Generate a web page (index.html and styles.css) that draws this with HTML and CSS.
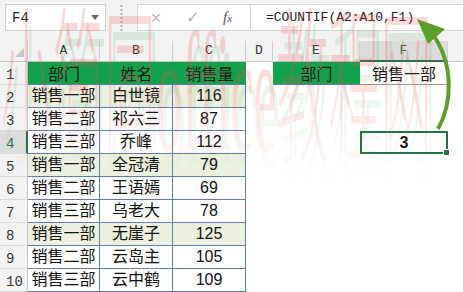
FILE: index.html
```html
<!DOCTYPE html>
<html lang="zh-CN">
<head>
    <meta charset="UTF-8">
    <title>COUNTIF</title>
    <link rel="stylesheet" href="styles.css">
</head>
<body>
    <div class="toolbar">
        <div class="namebox"><span>F4</span><span class="caret"></span></div>
        <div class="grip"></div>
        <div class="formula">
            <div class="fx-btns">
                <span class="btn-x">✕</span>
                <span class="btn-ok">✓</span>
                <span class="fx"><i>f</i><i class="x">x</i></span>
            </div>
            <div class="formula-text">=COUNTIF(A2:A10,F1)</div>
        </div>
    </div>

    <div class="sheet">
        <div class="corner"></div>
        <div class="ch">A</div><div class="ch">B</div><div class="ch">C</div><div class="ch">D</div>
        <div class="ch">E</div><div class="ch sel">F</div><div class="ch last"></div>

        <div class="rh">1</div>
        <div class="c head">部门</div><div class="c head">姓名</div><div class="c head">销售量</div>
        <div class="c"></div><div class="c head">部门</div><div class="c crit">销售一部</div><div class="c"></div>

        <div class="rh">2</div>
        <div class="c t hl">销售一部</div><div class="c t hl">白世镜</div><div class="c t hl">116</div>
        <div class="c"></div><div class="c"></div><div class="c"></div><div class="c"></div>

        <div class="rh">3</div>
        <div class="c t">销售二部</div><div class="c t">祁六三</div><div class="c t">87</div>
        <div class="c"></div><div class="c"></div><div class="c"></div><div class="c"></div>

        <div class="rh sel">4</div>
        <div class="c t">销售三部</div><div class="c t">乔峰</div><div class="c t">112</div>
        <div class="c"></div><div class="c"></div><div class="c active">3</div><div class="c"></div>

        <div class="rh">5</div>
        <div class="c t hl">销售一部</div><div class="c t hl">全冠清</div><div class="c t hl">79</div>
        <div class="c"></div><div class="c"></div><div class="c"></div><div class="c"></div>

        <div class="rh">6</div>
        <div class="c t">销售二部</div><div class="c t">王语嫣</div><div class="c t">69</div>
        <div class="c"></div><div class="c"></div><div class="c"></div><div class="c"></div>

        <div class="rh">7</div>
        <div class="c t">销售三部</div><div class="c t">乌老大</div><div class="c t">78</div>
        <div class="c"></div><div class="c"></div><div class="c"></div><div class="c"></div>

        <div class="rh">8</div>
        <div class="c t hl">销售一部</div><div class="c t hl">无崖子</div><div class="c t hl">125</div>
        <div class="c"></div><div class="c"></div><div class="c"></div><div class="c"></div>

        <div class="rh">9</div>
        <div class="c t">销售二部</div><div class="c t">云岛主</div><div class="c t">105</div>
        <div class="c"></div><div class="c"></div><div class="c"></div><div class="c"></div>

        <div class="rh">10</div>
        <div class="c t">销售三部</div><div class="c t">云中鹤</div><div class="c t">109</div>
        <div class="c"></div><div class="c"></div><div class="c"></div><div class="c"></div>
    </div>

    <div class="watermark">小简同office教程网</div>

    <svg class="arrow" width="463" height="292" viewBox="0 0 463 292">
        <path d="M438 129 C452 104 454 66 434 36" fill="none" stroke="#5c9e2c" stroke-width="4"/>
        <polygon points="417,19 445,29 428,44" fill="#5c9e2c"/>
    </svg>
</body>
</html>
```

FILE: styles.css
```css
body {
    margin: 0;
    width: 463px;
    height: 292px;
    overflow: hidden;
    position: relative;
    background: #fff;
    font-family: "Noto Sans CJK SC", sans-serif;
}

.toolbar {
    height: 41px;
    background: #f3f3f3;
    display: flex;
    align-items: flex-start;
    padding-top: 4px;
    box-sizing: border-box;
    font-family: "Liberation Mono", monospace;
}

.namebox {
    margin-left: 5px;
    width: 101px;
    height: 27px;
    box-sizing: border-box;
    background: #fff;
    border: 1px solid #cfcfcf;
    display: flex;
    align-items: center;
    justify-content: space-between;
    padding: 0 6px;
    font-size: 14px;
    color: #222;
}

.caret {
    width: 0;
    height: 0;
    border-left: 4px solid transparent;
    border-right: 4px solid transparent;
    border-top: 5px solid #666;
}

.grip {
    width: 31px;
    height: 27px;
    background: radial-gradient(circle, #b5b5b5 1px, transparent 1.3px);
    background-size: 3px 4px;
    background-position: 14px 8px;
    background-repeat: repeat-y;
}

.formula {
    flex: 1;
    height: 27px;
    display: flex;
    background: #fff;
    border: 1px solid #d4d4d4;
    border-right: none;
    box-sizing: border-box;
}

.fx-btns {
    width: 112px;
    display: flex;
    align-items: center;
    border-right: 1px solid #d4d4d4;
    color: #b4b4b4;
}

.btn-x {
    margin-left: 12px;
    width: 36px;
    font-family: "DejaVu Sans", sans-serif;
    font-size: 14px;
}

.btn-ok {
    width: 37px;
    font-family: "DejaVu Sans", sans-serif;
    font-size: 16px;
}

.fx {
    font-family: "Liberation Serif", serif;
    color: #555;
    font-size: 15px;
}

.fx .x {
    font-size: 11px;
}

.formula-text {
    padding-left: 15px;
    line-height: 25px;
    font-size: 13px;
    color: #222;
}

.sheet {
    display: grid;
    grid-template-columns: 28px 72px 73px 73px 27px 87px 88px 1fr;
    grid-template-rows: 21px repeat(10, 23px);
}

.corner {
    background: #f3f3f3;
    border-right: 1px solid #d0d0d0;
    border-bottom: 1px solid #c4c4c4;
    position: relative;
}

.corner::after {
    content: "";
    position: absolute;
    right: 3px;
    bottom: 4px;
    border-left: 9px solid transparent;
    border-bottom: 9px solid #c6c6c6;
}

.ch {
    background: #f3f3f3;
    border-right: 1px solid #d0d0d0;
    border-bottom: 1px solid #c4c4c4;
    font-family: "Liberation Mono", monospace;
    font-size: 13px;
    color: #333;
    text-align: center;
    line-height: 20px;
}

.ch.sel {
    background: #dcdcdc;
    border-bottom: 2px solid #217346;
    color: #217346;
}

.ch.last {
    border-right: none;
}

.rh {
    background: #f3f3f3;
    border-right: 1px solid #c4c4c4;
    border-bottom: 1px solid #dadada;
    font-family: "Liberation Mono", monospace;
    font-size: 14px;
    color: #333;
    padding-left: 6px;
    line-height: 26px;
    box-sizing: border-box;
}

.rh.sel {
    background: #dcdcdc;
    border-right: 2px solid #217346;
    color: #217346;
}

.c {
    font-size: 16px;
    line-height: 22px;
    text-align: center;
    color: #111;
    box-sizing: border-box;
}

.head {
    background: #13a24c;
    border-bottom: 1px solid #5b7cb4;
}

.crit {
    border-bottom: 1px solid #9a9a9a;
}

.t {
    border-right: 1px solid #5b7cb4;
    border-bottom: 1px solid #5b7cb4;
    font-family: "Liberation Sans", "Noto Sans CJK SC", sans-serif;
}

.hl {
    background: #ebf1de;
}

.active {
    border: 2px solid #217346;
    font-family: "Liberation Sans", sans-serif;
    font-weight: bold;
    line-height: 19px;
    position: relative;
}

.active::after {
    content: "";
    position: absolute;
    right: -4px;
    bottom: -4px;
    width: 5px;
    height: 5px;
    background: #217346;
    border: 1px solid #fff;
}

.watermark {
    position: absolute;
    left: 0;
    top: 8px;
    font-family: "Liberation Serif", "Noto Sans CJK SC", serif;
    font-size: 52px;
    font-weight: 300;
    line-height: 1;
    white-space: nowrap;
    color: rgba(240, 80, 80, 0.22);
    text-shadow: 4px 5px 0 rgba(40, 150, 70, 0.12);
    transform: scale(1, 3.3);
    transform-origin: top left;
    pointer-events: none;
    -webkit-mask-image: linear-gradient(to bottom, #000 35%, transparent 100%);
    mask-image: linear-gradient(to bottom, #000 35%, transparent 100%);
}

.arrow {
    position: absolute;
    left: 0;
    top: 0;
    pointer-events: none;
}
```
